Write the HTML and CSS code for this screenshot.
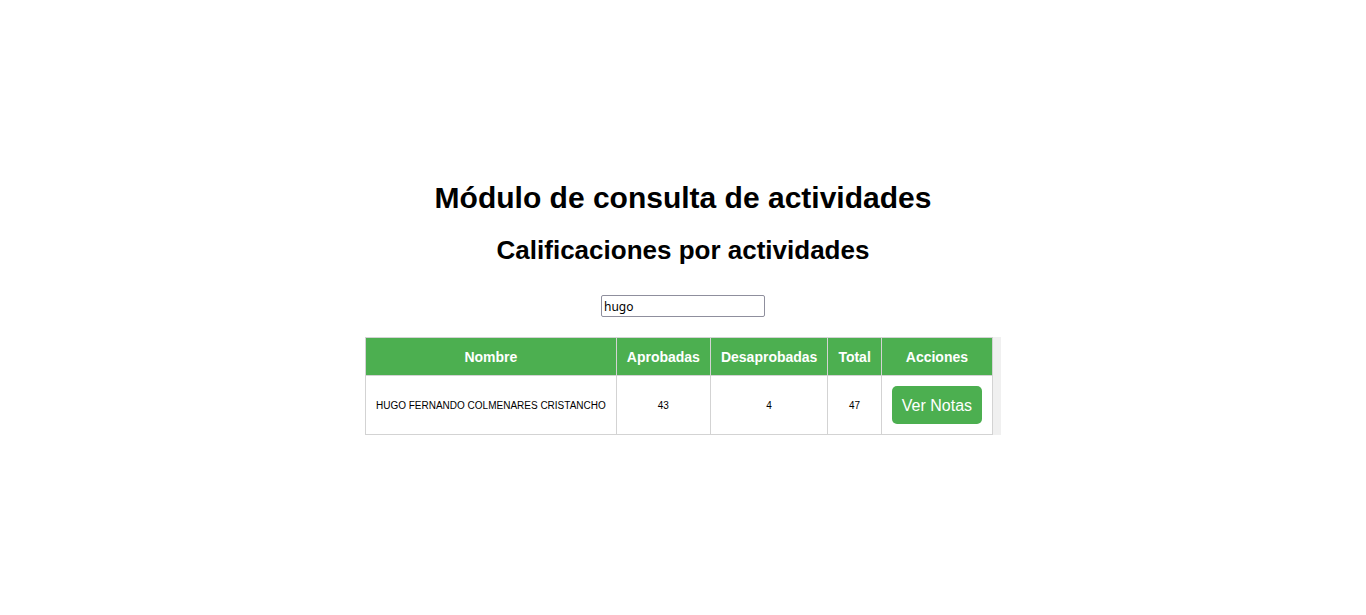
FILE: index.html
```html
<!DOCTYPE html>
<html lang="es">
<head>
<meta charset="utf-8">
<title>Módulo de consulta de actividades</title>
<link rel="stylesheet" href="styles.css">
</head>
<body>
<main class="page">
  <h1 class="title">Módulo de consulta de actividades</h1>
  <h2 class="subtitle">Calificaciones por actividades</h2>
  <input class="search" type="text" value="hugo" aria-label="Buscar estudiante">
  <div class="table-box">
    <table class="grades">
      <thead>
        <tr><th>Nombre</th><th>Aprobadas</th><th>Desaprobadas</th><th>Total</th><th>Acciones</th></tr>
      </thead>
      <tbody>
        <tr><td>HUGO FERNANDO COLMENARES CRISTANCHO</td><td>43</td><td>4</td><td>47</td><td><button class="notes" type="button">Ver Notas</button></td></tr>
      </tbody>
    </table>
  </div>
</main>
</body>
</html>
```
FILE: styles.css
```css
body {
  margin: 0;
  background: #fff;
  color: #000;
  font-family: "Liberation Sans", Arial, sans-serif;
}

.page {
  display: flex;
  flex-direction: column;
  align-items: center;
  justify-content: center;
  min-height: 100vh;
}

.title {
  margin: 0 0 18px;
  font-size: 30px;
  line-height: 35px;
}

.subtitle {
  margin: 0 0 28px;
  font-size: 26px;
  line-height: 34px;
}

.search {
  box-sizing: border-box;
  width: 164px;
  height: 22px;
  margin-bottom: 20px;
  padding: 1px 2px;
  border: 1px solid #8f8f9d;
  border-radius: 2px;
  background: #fff;
  color: #000;
  font-family: "Noto Sans", sans-serif;
  font-size: 12px;
}

.table-box {
  padding-right: 8px;
  background: #f0f0f0;
}

.grades {
  border-collapse: collapse;
  background: #fff;
  font-size: 10px;
  text-align: center;
}

.grades th,
.grades td {
  padding: 10px;
  border: 1px solid #d3d3d3;
}

.grades th {
  padding: 11px 10px 9px;
  background: #4caf50;
  color: #fff;
  font-size: 14px;
  line-height: 17px;
}

.notes {
  display: block;
  padding: 11px 10px 9px;
  border: 0;
  border-radius: 5px;
  background: #4caf50;
  color: #fff;
  font-family: inherit;
  font-size: 16px;
  line-height: 18px;
}
```
